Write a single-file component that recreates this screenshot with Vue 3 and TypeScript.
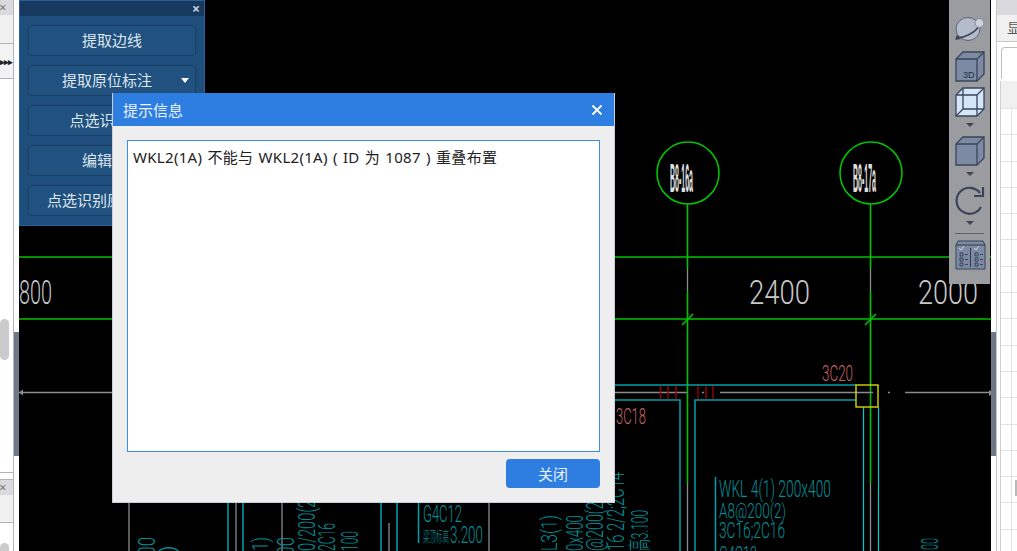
<script setup lang="ts">
interface CadText {
  x: number
  y: number
  text: string
  len: number
  size: number
  cls: string
  vertical?: boolean
}

const panelButtons = [
  { label: '提取边线', caret: false },
  { label: '提取原位标注', caret: true },
  { label: '点选识别梁', caret: true },
  { label: '编辑支座', caret: false },
  { label: '点选识别原位标注', caret: true },
]

const cadTexts: CadText[] = [
  { x: 19, y: 304, text: '800', len: 33, size: 33, cls: 'dim' },
  { x: 749, y: 304, text: '2400', len: 61, size: 33, cls: 'dim' },
  { x: 918, y: 304, text: '2000', len: 60, size: 33, cls: 'dim' },
  { x: 822, y: 381, text: '3C20', len: 31, size: 22, cls: 'rebar' },
  { x: 616, y: 424, text: '3C18', len: 30, size: 22, cls: 'rebar' },
  { x: 719, y: 497, text: 'WKL 4(1) 200x400', len: 112, size: 24, cls: 'note' },
  { x: 719, y: 518, text: 'A8@200(2)', len: 67, size: 20, cls: 'note' },
  { x: 719, y: 538, text: '3C16;2C16', len: 66, size: 22, cls: 'note' },
  { x: 719, y: 562, text: 'G4C12', len: 38, size: 22, cls: 'note' },
  { x: 423, y: 522, text: 'G4C12', len: 39, size: 24, cls: 'note' },
  { x: 423, y: 542, text: '梁顶标高', len: 26, size: 15, cls: 'note' },
  { x: 450, y: 543, text: '3.200', len: 33, size: 24, cls: 'note' },
  { x: 155, y: 565, text: '100', len: 28, size: 24, cls: 'note', vertical: true },
  { x: 175, y: 575, text: '(2)', len: 30, size: 22, cls: 'note', vertical: true },
  { x: 268, y: 565, text: '3(1)', len: 28, size: 22, cls: 'note', vertical: true },
  { x: 294, y: 565, text: '400', len: 28, size: 24, cls: 'note', vertical: true },
  { x: 315, y: 551, text: '0/200(2)', len: 56, size: 24, cls: 'note', vertical: true },
  { x: 335, y: 551, text: '2C16', len: 28, size: 24, cls: 'note', vertical: true },
  { x: 358, y: 551, text: '100', len: 20, size: 24, cls: 'note', vertical: true },
  { x: 557, y: 551, text: 'L3(1)', len: 36, size: 22, cls: 'note', vertical: true },
  { x: 583, y: 551, text: '0x400', len: 36, size: 24, cls: 'note', vertical: true },
  { x: 603, y: 551, text: '@200(2)', len: 54, size: 24, cls: 'note', vertical: true },
  { x: 624, y: 551, text: '16 2/2;2C14', len: 79, size: 24, cls: 'note', vertical: true },
  { x: 648, y: 551, text: '高3.100', len: 41, size: 24, cls: 'note', vertical: true },
  { x: 938, y: 562, text: '3100', len: 24, size: 24, cls: 'note', vertical: true },
]

const axisBubbles = [
  { x: 688, label: 'B8-16a' },
  { x: 871, label: 'B8-17a' },
]

const redTicks = [660.5, 668, 676, 698, 706, 713]
const tealVerticals = [228, 243, 381, 397]
const grayVerticals = [129, 236, 282, 489]

const textTransform = (t: CadText) => (t.vertical ? `rotate(-90 ${t.x} ${t.y})` : undefined)
</script>

<template>
  <div class="screen">
    <aside class="left-col">
      <div class="pane-head"><span>×</span></div>
      <div class="pane-blank"></div>
      <div class="pane-tools"><span>▸▸▸</span></div>
      <div class="pane-list"><i class="thumb"></i></div>
      <div class="pane-head second"><span>×</span></div>
      <div class="pane-blank short"></div>
      <div class="pane-list bottom"><i class="thumb low"></i></div>
    </aside>
    <div class="strip"><i class="grip"></i></div>

    <main class="canvas">
      <svg class="cad" width="972" height="551" viewBox="19 0 972 551">
        <g class="green">
          <line x1="19" y1="257" x2="991" y2="257" />
          <line x1="19" y1="319" x2="991" y2="319" />
          <template v-for="b in axisBubbles" :key="b.x">
            <circle :cx="b.x" cy="173" r="31" />
            <line :x1="b.x - 0.5" y1="204" :x2="b.x - 0.5" y2="269" />
            <line :x1="b.x - 0.5" y1="291" :x2="b.x - 0.5" y2="483" />
            <line :x1="b.x - 6" y1="325" :x2="b.x + 5" y2="314" />
          </template>
        </g>
        <g class="gray">
          <template v-for="b in axisBubbles" :key="b.x">
            <line :x1="b.x - 0.5" y1="269" :x2="b.x - 0.5" y2="291" />
            <line :x1="b.x - 0.5" y1="483" :x2="b.x - 0.5" y2="551" />
          </template>
          <line v-for="x in grayVerticals" :key="x" :x1="x" y1="500" :x2="x" y2="551" />
          <line x1="389" y1="523" x2="389" y2="551" />
          <line x1="19" y1="392.5" x2="112" y2="392.5" />
          <line x1="614" y1="392.5" x2="687" y2="392.5" />
          <line x1="720" y1="392.5" x2="873" y2="392.5" />
          <line x1="905" y1="392.5" x2="991" y2="392.5" />
          <line x1="888" y1="392.5" x2="890" y2="392.5" />
          <line x1="702" y1="392.5" x2="704" y2="392.5" />
        </g>
        <polygon class="arrow" points="19,392.5 23,389.5 23,395.5" />
        <polygon class="arrow" points="994,393 989,390 989,396" />
        <g class="teal">
          <line x1="614" y1="385" x2="856" y2="385" />
          <polyline points="614,400 680,400 680,551" />
          <polyline points="856,400 695,400 695,551" />
          <line v-for="x in tealVerticals" :key="x" :x1="x" y1="502" :x2="x" y2="551" />
          <line x1="715.5" y1="477" x2="715.5" y2="551" />
          <line x1="418.5" y1="502" x2="418.5" y2="543" />
        </g>
        <g class="cyan">
          <line x1="863.5" y1="407" x2="863.5" y2="551" />
          <line x1="878.5" y1="407" x2="878.5" y2="551" />
        </g>
        <line v-for="x in redTicks" :key="x" class="tick" :x1="x" y1="386" :x2="x" y2="399" />
        <rect class="grip-box" x="856" y="385" width="22" height="22" />

        <text
          v-for="b in axisBubbles"
          :key="b.label"
          class="bubble-text"
          :x="b.x - 18"
          y="192"
          textLength="23"
          lengthAdjust="spacingAndGlyphs"
        >{{ b.label }}</text>
        <text
          v-for="t in cadTexts"
          :key="t.text + t.x"
          :class="t.cls"
          :x="t.x"
          :y="t.y"
          :font-size="t.size"
          :textLength="t.len"
          lengthAdjust="spacingAndGlyphs"
          :transform="textTransform(t)"
        >{{ t.text }}</text>
      </svg>

      <section class="float-panel">
        <header class="float-head"><span>×</span></header>
        <div class="float-body">
          <button v-for="b in panelButtons" :key="b.label" class="float-btn" :class="{ 'has-caret': b.caret }">
            <span>{{ b.label }}</span>
            <i v-if="b.caret" class="caret"></i>
          </button>
        </div>
      </section>

      <nav class="view-bar">
        <svg class="tool orb" width="32" height="32" viewBox="0 0 32 32">
          <ellipse cx="14" cy="19" rx="12" ry="11.5" fill="#b4bccb" stroke="#59637a" />
          <path d="M2 27 C9 29 21 23 26 15" fill="none" stroke="#3f4859" stroke-width="1.6" />
          <path d="M1 30 L3 25 L7 29 Z" fill="#3f4859" />
          <circle cx="25.5" cy="13" r="4.5" fill="#cdd3dd" stroke="#7d8698" />
        </svg>
        <svg class="tool" width="32" height="31" viewBox="0 0 32 31">
          <path d="M2 8 L9 1 H30 V23 L23 30 H2 Z" fill="#7c8ba3" stroke="#39445a" stroke-width="1.3" />
          <path d="M2 8 H23 V30 M23 8 L30 1" fill="none" stroke="#39445a" stroke-width="1.3" />
          <text class="cube-label" x="9" y="27">3D</text>
        </svg>
        <svg class="tool" width="32" height="30" viewBox="0 0 32 30">
          <path d="M2 8 L9 1 H30 V22 L23 29 H2 Z" fill="#d4e6f8" stroke="#39445a" stroke-width="1.3" />
          <path d="M2 8 H23 V29 M23 8 L30 1 M9 1 V22 H30 M9 22 L2 29" fill="none" stroke="#39445a" stroke-width="1.3" />
        </svg>
        <i class="drop"></i>
        <svg class="tool" width="32" height="30" viewBox="0 0 32 30">
          <path d="M2 8 L9 1 H30 V22 L23 29 H2 Z" fill="#7c8ba3" stroke="#39445a" stroke-width="1.3" />
          <path d="M2 8 H23 V29 M23 8 L30 1" fill="none" stroke="#39445a" stroke-width="1.3" />
        </svg>
        <i class="drop"></i>
        <svg class="tool" width="32" height="30" viewBox="0 0 32 30">
          <path d="M26 8 A13 13 0 1 0 27 22" fill="none" stroke="#39445a" stroke-width="2.2" />
          <path d="M29 2 V11 H20" fill="none" stroke="#39445a" stroke-width="2.2" />
        </svg>
        <i class="drop"></i>
        <hr class="bar-rule" />
        <svg class="tool" width="31" height="30" viewBox="0 0 31 30">
          <path d="M1 5 L3 1 H28 L30 5 V29 H1 Z" fill="#7c8ba3" stroke="#39445a" />
          <path d="M1 5 H30 M15.5 8 V27" stroke="#2f384a" fill="none" />
          <path d="M4 8 L6 10 L9 6 M19 8 L21 10 L24 6" stroke="#e4ecf4" stroke-width="0.8" fill="none" />
          <path d="M5 13 h3 v3 h-3 z M5 18 h3 v3 h-3 z M5 23 h3 v3 h-3 z M20 13 h3 v3 h-3 z M20 18 h3 v3 h-3 z M20 23 h3 v3 h-3 z" fill="none" stroke="#2a3342" stroke-width="0.8" />
          <path d="M10 14.5 h3 M10 19.5 h3 M10 24.5 h3 M25 14.5 h3 M25 19.5 h3 M25 24.5 h3" stroke="#2a3342" stroke-width="0.8" />
        </svg>
      </nav>
    </main>

    <div class="strip"><i class="grip"></i></div>

    <aside class="right-col">
      <div class="pane-head"></div>
      <div class="right-title"><span>显示设置</span></div>
      <div class="right-tab"></div>
      <div class="right-table">
        <div class="table-head"></div>
        <div class="table-grid"><i class="row-handle"></i></div>
      </div>
    </aside>

    <div class="dialog">
      <header class="dialog-head">
        <span>提示信息</span>
        <svg width="12" height="12" viewBox="0 0 12 12">
          <path d="M1.5 1.5 L10.5 10.5 M10.5 1.5 L1.5 10.5" stroke="#fff" stroke-width="1.8" />
        </svg>
      </header>
      <div class="dialog-body">
        <div class="message">WKL2(1A) 不能与 WKL2(1A) ( ID 为 1087 ) 重叠布置</div>
        <footer class="dialog-foot">
          <button class="close-btn">关闭</button>
        </footer>
      </div>
    </div>
  </div>
</template>

<style scoped>
.screen {
  position: relative;
  display: grid;
  grid-template-columns: 14px 5px 972px 5px 21px;
  width: 1017px;
  height: 551px;
  overflow: hidden;
  background: #fff;
  font-family: "Noto Sans", "Noto Sans CJK SC", sans-serif;
}

.left-col {
  display: flex;
  flex-direction: column;
  height: 551px;
  overflow: hidden;
  border-right: 1px solid #b4b4b8;
  box-sizing: border-box;
}

.pane-head {
  display: flex;
  align-items: center;
  height: 15px;
  flex: none;
  background: #d9d9de;
  color: #777;
  font-size: 13px;
  line-height: 15px;
  overflow: hidden;
}

.pane-head span {
  margin-left: -1px;
}

.pane-head.second {
  margin-top: 6px;
  border-top: 1px solid #b4b4b8;
}

.pane-blank {
  height: 28px;
  flex: none;
  background: #f0f0f0;
  border-bottom: 1px solid #b4b4b8;
}

.pane-blank.short {
  height: 27px;
}

.pane-tools {
  height: 34px;
  flex: none;
  background: #f3f3f3;
  border-bottom: 1px solid #b4b4b8;
  color: #222;
  font-size: 9px;
  font-weight: 700;
  line-height: 35px;
  white-space: nowrap;
  letter-spacing: -1px;
}

.pane-list {
  position: relative;
  height: 393px;
  flex: none;
  border-bottom: 1px solid #b4b4b8;
  background: #fff;
}

.pane-list.bottom {
  height: 40px;
  border-bottom: none;
}

.thumb {
  position: absolute;
  top: 240px;
  left: 0;
  width: 9px;
  height: 41px;
  border-radius: 5px;
  background: #cbcbcb;
}

.thumb.low {
  top: 20px;
}

.strip {
  background: #fff;
}

.grip {
  display: block;
  width: 5px;
  height: 124px;
  margin-top: 332px;
  background: #6d7a85;
}

.canvas {
  position: relative;
  height: 551px;
  background: #000;
  overflow: hidden;
}

.cad {
  display: block;
}

.cad line,
.cad polyline,
.cad circle {
  fill: none;
}

.green {
  stroke: #00c400;
  stroke-width: 1.6;
}

.gray {
  stroke: #8c8c8c;
  stroke-width: 1.3;
}

.arrow {
  fill: #8c8c8c;
}

.teal {
  stroke: #00a0aa;
  stroke-width: 1.5;
}

.cyan {
  stroke: #00c8d0;
  stroke-width: 1.2;
}

.tick {
  stroke: #a00000;
  stroke-width: 1.4;
}

.grip-box {
  fill: none;
  stroke: #d8d800;
  stroke-width: 1.4;
}

.bubble-text {
  fill: #e0e0e0;
  font-family: "Liberation Sans", sans-serif;
  font-size: 40px;
  font-weight: 700;
}

.dim {
  fill: #c8c8c8;
  font-family: Roboto, "Liberation Sans", sans-serif;
  font-weight: 300;
}

.rebar {
  fill: #c96464;
  font-family: Roboto, "Liberation Sans", sans-serif;
  font-weight: 300;
}

.note {
  fill: #009097;
  font-family: Roboto, "Noto Sans CJK SC", sans-serif;
  font-weight: 300;
}

.float-panel {
  position: absolute;
  top: 0;
  left: 0;
  width: 186px;
  height: 226px;
  box-sizing: border-box;
  border: 1px solid #2a619a;
  background: #1f4d7c;
}

.float-head {
  display: flex;
  justify-content: flex-end;
  align-items: center;
  height: 15px;
  padding-right: 4px;
  background: #18395f;
  color: #c4d2e0;
  font-size: 14px;
  font-weight: 700;
}

.float-body {
  display: flex;
  flex-direction: column;
  gap: 9px;
  padding: 9px 8px 0 8px;
}

.float-btn {
  position: relative;
  height: 31px;
  padding: 0 0 2px;
  border: 1px solid #1a3f66;
  border-radius: 4px;
  background: #20517f;
  color: #dfe7ef;
  font: 15px "Noto Sans CJK SC", sans-serif;
}

.float-btn.has-caret {
  padding-right: 10px;
}

.caret {
  position: absolute;
  top: 12px;
  right: 6px;
  border-left: 4.5px solid transparent;
  border-right: 4.5px solid transparent;
  border-top: 5px solid #fff;
}

.view-bar {
  position: absolute;
  top: 0;
  right: 1px;
  display: flex;
  flex-direction: column;
  align-items: center;
  width: 41px;
  height: 284px;
  padding-top: 10px;
  box-sizing: border-box;
  background: #9a9c9f;
}

.tool {
  display: block;
  flex: none;
  margin-left: 1px;
}

.orb {
  margin-bottom: 4px;
}

.cube-label {
  fill: #26303f;
  font-family: "Liberation Sans", sans-serif;
  font-size: 9px;
}

.drop {
  flex: none;
  margin: 6px 0 9px 0;
  border-left: 4px solid transparent;
  border-right: 4px solid transparent;
  border-top: 4px solid #3c4658;
}

.view-bar > svg + svg {
  margin-top: 5px;
}

.bar-rule {
  flex: none;
  width: 29px;
  height: 1px;
  margin: -1px 0 6px;
  border: none;
  background: #5f6164;
}

.right-col {
  display: flex;
  flex-direction: column;
  height: 551px;
  overflow: hidden;
  border-left: 1px solid #c6c6c6;
  box-sizing: border-box;
}

.right-title {
  height: 27px;
  flex: none;
  padding-left: 10px;
  box-sizing: border-box;
  background: #f0f0f0;
  border-bottom: 1px solid #c8c8c8;
  color: #5a5a5a;
  font-size: 14px;
  line-height: 26px;
  white-space: nowrap;
  overflow: hidden;
}

.right-tab {
  height: 31px;
  flex: none;
  margin: 5px 0 0 4px;
  border: 1px solid #bdbdbd;
  border-right: none;
  border-bottom: none;
  border-radius: 4px 0 0 0;
}

.right-table {
  flex: 1;
  display: flex;
  flex-direction: column;
  margin: 2px 0 0 3px;
  border-left: 1px solid #d0d0d0;
}

.table-head {
  height: 27px;
  flex: none;
  background: #f0f0f0;
}

.table-grid {
  position: relative;
  flex: 1;
  background-image:
    repeating-linear-gradient(to bottom, #e2e2e2 0 1px, transparent 1px 26.3px),
    linear-gradient(to right, transparent 10px, #e2e2e2 10px 11px, transparent 11px);
}

.row-handle {
  position: absolute;
  top: 372px;
  right: 0;
  width: 2px;
  height: 16px;
  background: #bbb;
}

.dialog {
  position: absolute;
  top: 93px;
  left: 112px;
  display: flex;
  flex-direction: column;
  width: 503px;
  height: 410px;
  box-sizing: border-box;
  border: 1px solid #c9d0da;
  border-top: none;
  background: #eee;
}

.dialog-head {
  display: flex;
  justify-content: space-between;
  align-items: center;
  height: 33px;
  flex: none;
  padding: 0 11px 0 10px;
  background: #2e7de1;
  color: #e8f1fc;
  font-size: 15px;
  font-family: "Noto Sans CJK SC", sans-serif;
}

.dialog-body {
  display: flex;
  flex-direction: column;
  flex: 1;
  padding: 14px;
}

.message {
  height: 312px;
  flex: none;
  box-sizing: border-box;
  padding: 5px;
  border: 1px solid #3a8ee0;
  background: #fff;
  color: #222;
  font-size: 15px;
  letter-spacing: 0.3px;
  word-spacing: 1px;
  line-height: 22px;
  white-space: nowrap;
}

.dialog-foot {
  display: flex;
  justify-content: flex-end;
  margin-top: 7px;
}

.close-btn {
  width: 94px;
  height: 29px;
  padding: 0;
  border: none;
  border-radius: 4px;
  background: #2e7de1;
  color: #e8f1fc;
  font: 15px "Noto Sans CJK SC", sans-serif;
}
</style>

<style>
html,
body {
  margin: 0;
  background: #fff;
}
</style>
